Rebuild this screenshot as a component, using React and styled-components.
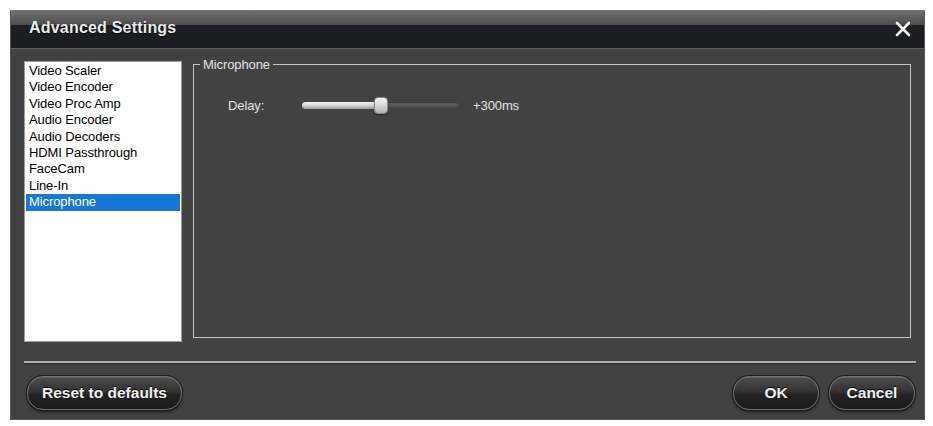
import React, { useState } from "react";
import styled, { createGlobalStyle } from "styled-components";

const GlobalStyle = createGlobalStyle`
  * { box-sizing: border-box; }
  body {
    margin: 0;
    background: #ffffff;
    font-family: "Liberation Sans", Arial, sans-serif;
  }
`;

const items = [
  "Video Scaler",
  "Video Encoder",
  "Video Proc Amp",
  "Audio Encoder",
  "Audio Decoders",
  "HDMI Passthrough",
  "FaceCam",
  "Line-In",
  "Microphone",
];

const App = () => {
  let [selected, setSelected] = useState("Microphone");
  let delay = 300;
  let max = 650;
  let thumbLeft = Math.round((delay / max) * (157 - 14)) + 6;
  return (
    <Page>
      <GlobalStyle />
      <Window>
        <TitleBar>
          <Title>Advanced Settings</Title>
          <Close aria-label="close">
            <svg width="16" height="16" viewBox="0 0 16 16">
              <path
                d="M2 2 L14 14 M14 2 L2 14"
                stroke="#f4f4f4"
                strokeWidth="2.6"
                strokeLinecap="round"
              />
            </svg>
          </Close>
        </TitleBar>
        <Body>
          <MainRow>
            <List>
              {items.map((item) => (
                <Item
                  key={item}
                  $active={item === selected}
                  onClick={() => setSelected(item)}
                >
                  {item}
                </Item>
              ))}
            </List>
            <Group>
              <Legend>{selected}</Legend>
              <SettingRow>
                <Label>Delay:</Label>
                <Slider>
                  <Track />
                  <Fill style={{ width: thumbLeft + 7 }} />
                  <Thumb style={{ left: thumbLeft }} />
                </Slider>
                <Value>+{delay}ms</Value>
              </SettingRow>
            </Group>
          </MainRow>
          <Separator />
          <ButtonRow>
            <Button $width={155}>Reset to defaults</Button>
            <RightButtons>
              <Button $width={86}>OK</Button>
              <Button $width={86}>Cancel</Button>
            </RightButtons>
          </ButtonRow>
        </Body>
      </Window>
    </Page>
  );
};
export default App;

const Page = styled.div`
  padding: 10px 0 0 10px;
`;

const Window = styled.div`
  display: flex;
  flex-direction: column;
  width: 915px;
  height: 410px;
  background: #424242;
  border: 1px solid #575757;
  border-top: 1px solid #7a7a7a;
`;

const TitleBar = styled.div`
  display: flex;
  flex-direction: row;
  justify-content: space-between;
  align-items: center;
  height: 38px;
  padding: 0 12px 3px 18px;
  background: linear-gradient(
    to bottom,
    #707070 0px,
    #4c4c4c 14px,
    #1d1e22 14px,
    #1b1c20 100%
  );
  border-bottom: 1px solid #626262;
`;

const Title = styled.div`
  font-family: "Liberation Sans", Arial, sans-serif;
  font-weight: bold;
  font-size: 16px;
  color: #ececec;
  text-shadow: 0 1px 1px #000;
  letter-spacing: 0.2px;
`;

const Close = styled.div`
  display: flex;
  align-items: center;
  justify-content: center;
  width: 18px;
  height: 18px;
  margin-top: 2px;
`;

const Body = styled.div`
  display: flex;
  flex-direction: column;
  padding: 12px 13px 9px 13px;
`;

const MainRow = styled.div`
  display: flex;
  flex-direction: row;
  gap: 11px;
  height: 281px;
`;

const List = styled.div`
  display: flex;
  flex-direction: column;
  width: 158px;
  height: 281px;
  background: #ffffff;
  border: 1px solid #9c9c9c;
  padding: 1px 1px;
`;

const Item = styled.div`
  height: 16.4px;
  line-height: 16.4px;
  padding-left: 3px;
  font-family: "Liberation Sans", Arial, sans-serif;
  font-size: 13px;
  letter-spacing: -0.1px;
  color: ${(p) => (p.$active ? "#ffffff" : "#000000")};
  background: ${(p) => (p.$active ? "#1877d5" : "transparent")};
  white-space: nowrap;
  cursor: default;
`;

const Group = styled.fieldset`
  flex: 1;
  margin: -4px 0 4px 0;
  padding: 0;
  border: 1px solid #c4c4c4;
  min-width: 0;
`;

const Legend = styled.legend`
  margin-left: 6px;
  padding: 0 3px;
  font-family: "Liberation Sans", Arial, sans-serif;
  font-size: 13px;
  line-height: 15px;
  letter-spacing: -0.1px;
  color: #e4e4e4;
`;

const SettingRow = styled.div`
  display: flex;
  flex-direction: row;
  align-items: center;
  height: 17px;
  margin-top: 25px;
  padding-left: 34px;
`;

const Label = styled.div`
  width: 74px;
  font-family: "Liberation Sans", Arial, sans-serif;
  font-size: 13px;
  letter-spacing: -0.1px;
  color: #e4e4e4;
`;

const Slider = styled.div`
  position: relative;
  width: 157px;
  height: 17px;
`;

const Track = styled.div`
  position: absolute;
  left: 0;
  right: 0;
  top: 5px;
  height: 7px;
  border-radius: 4px;
  background: linear-gradient(to bottom, #646464, #525252 60%, #3e3e3e);
  box-shadow: inset 0 1px 1px rgba(0, 0, 0, 0.4);
`;

const Fill = styled.div`
  position: absolute;
  left: 0;
  top: 5px;
  height: 7px;
  border-radius: 4px 0 0 4px;
  background: linear-gradient(to bottom, #f4f4f4, #d8d8d8 45%, #9a9a9a);
`;

const Thumb = styled.div`
  position: absolute;
  top: 0;
  width: 14px;
  height: 17px;
  border-radius: 4px;
  border: 1px solid #8a8a8a;
  background: linear-gradient(to bottom, #f2f2f2, #d6d6d6 50%, #b0b0b0);
  box-shadow: 0 1px 1px rgba(0, 0, 0, 0.5);
`;

const Value = styled.div`
  margin-left: 14px;
  font-family: "Liberation Sans", Arial, sans-serif;
  font-size: 13px;
  letter-spacing: -0.1px;
  color: #e4e4e4;
`;

const Separator = styled.div`
  height: 2px;
  margin: 19px -5px 0 0;
  background: #afafaf;
  box-shadow: 0 1px 0 #2e2e2e;
`;

const ButtonRow = styled.div`
  display: flex;
  flex-direction: row;
  justify-content: space-between;
  align-items: center;
  margin: 13px -4px 0 3px;
`;

const RightButtons = styled.div`
  display: flex;
  flex-direction: row;
  gap: 10px;
`;

const Button = styled.div`
  display: flex;
  align-items: center;
  justify-content: center;
  width: ${(p) => p.$width}px;
  height: 34px;
  border-radius: 16px;
  border: 1px solid #707070;
  background: linear-gradient(
    to bottom,
    #4c4c4c 0%,
    #333333 45%,
    #222222 55%,
    #1a1a1a 100%
  );
  box-shadow: 0 0 0 1px #1c1c1c, 0 2px 3px rgba(0, 0, 0, 0.6),
    inset 0 1px 0 rgba(255, 255, 255, 0.12);
  font-family: "Liberation Sans", Arial, sans-serif;
  font-weight: bold;
  font-size: 15.5px;
  color: #f0f0f0;
  text-shadow: 0 -1px 0 #000;
  cursor: default;
`;
